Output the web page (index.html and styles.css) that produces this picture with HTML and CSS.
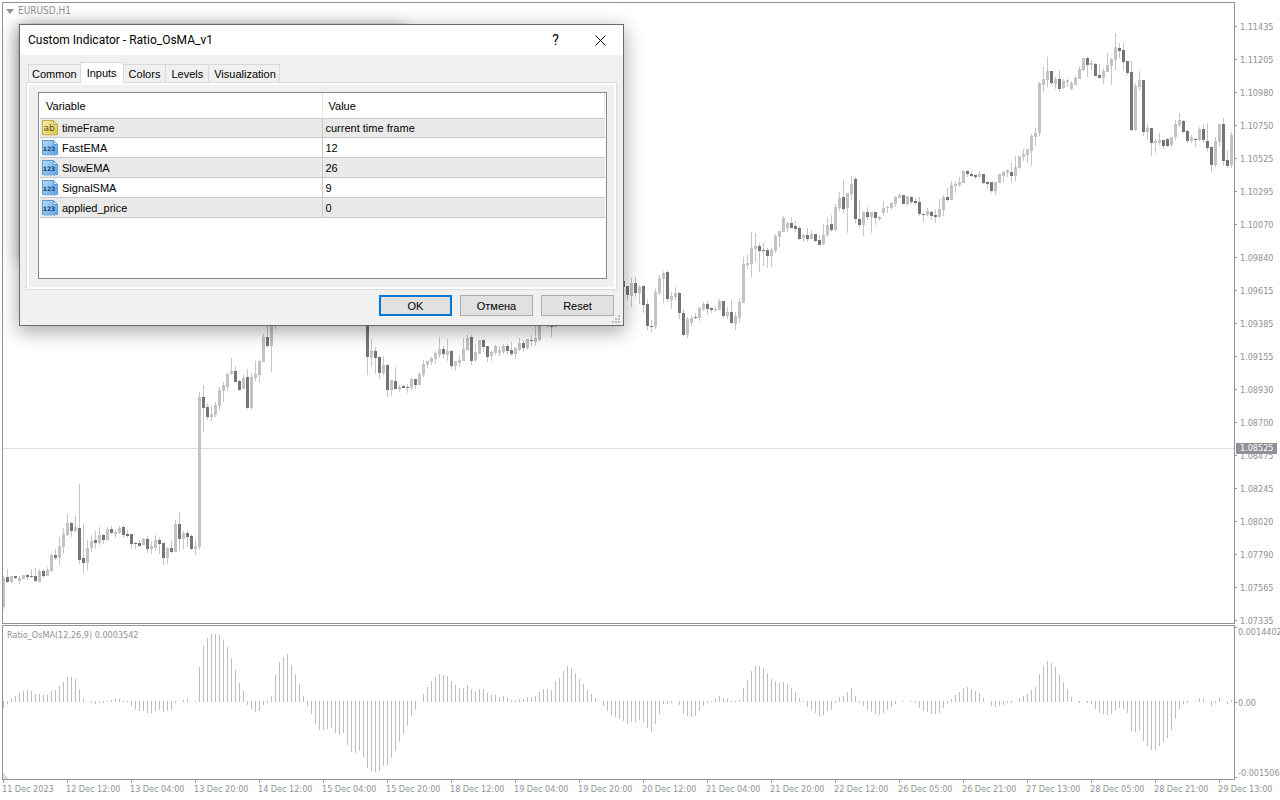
FILE: index.html
```html
<!DOCTYPE html>
<html lang="en">
<head>
<meta charset="utf-8">
<title>EURUSD,H1</title>
<link rel="stylesheet" href="styles.css">
</head>
<body>
<main class="terminal">
  <section class="panel price-panel">
    <div class="plot">
      <svg class="chart" id="price" viewBox="3 3 1231 620" preserveAspectRatio="none" shape-rendering="crispEdges" aria-label="Price chart"></svg>
      <h1 class="caption symbol"><svg class="caret" viewBox="0 0 8 5"><path d="M0 0h8L4 5z"/></svg>EURUSD,H1</h1>
    </div>
    <div class="axis">
      <ul class="scale" id="scale"></ul>
      <span class="bid">1.08525</span>
    </div>
  </section>

  <section class="panel osma-panel">
    <div class="plot">
      <svg class="chart" id="osma" viewBox="3 626 1231 153" preserveAspectRatio="none" shape-rendering="crispEdges" aria-label="Ratio_OsMA histogram"></svg>
      <h2 class="caption">Ratio_OsMA(12,26,9) 0.0003542</h2>
    </div>
    <div class="axis osma-axis">
      <span>0.0014402</span><span>0.00</span><span>-0.001506</span>
    </div>
  </section>

  <ul class="times" id="times"></ul>
</main>

<div class="back-shadow"></div>
<div class="dialog" role="dialog" aria-labelledby="dialog-title">
  <header class="titlebar">
    <h2 class="title" id="dialog-title">Custom Indicator - Ratio_OsMA_v1</h2>
    <button class="sys help" aria-label="Help">?</button>
    <button class="sys" aria-label="Close"><svg width="11" height="11" viewBox="0 0 11 11"><path d="M.5.5l10 10M10.5.5l-10 10"/></svg></button>
  </header>
  <div class="content">
    <div class="tabs" role="tablist">
      <button class="tab" role="tab">Common</button>
      <button class="tab active" role="tab" aria-selected="true">Inputs</button>
      <button class="tab" role="tab">Colors</button>
      <button class="tab" role="tab">Levels</button>
      <button class="tab" role="tab">Visualization</button>
    </div>
    <div class="pane">
      <div class="list">
        <table class="inputs">
          <colgroup><col class="name-col"><col></colgroup>
          <thead><tr><th>Variable</th><th>Value</th></tr></thead>
          <tbody>
            <tr><td><span class="cell"><svg class="icon gold" viewBox="0 0 16 16"><use href="#page"/><text x="7" y="11" class="glyph ab">ab</text></svg>timeFrame</span></td><td>current time frame</td></tr>
            <tr><td><span class="cell"><svg class="icon blue" viewBox="0 0 16 16"><use href="#page"/><text x="7" y="11" class="glyph num">123</text></svg>FastEMA</span></td><td>12</td></tr>
            <tr><td><span class="cell"><svg class="icon blue" viewBox="0 0 16 16"><use href="#page"/><text x="7" y="11" class="glyph num">123</text></svg>SlowEMA</span></td><td>26</td></tr>
            <tr><td><span class="cell"><svg class="icon blue" viewBox="0 0 16 16"><use href="#page"/><text x="7" y="11" class="glyph num">123</text></svg>SignalSMA</span></td><td>9</td></tr>
            <tr><td><span class="cell"><svg class="icon blue" viewBox="0 0 16 16"><use href="#page"/><text x="7" y="11" class="glyph num">123</text></svg>applied_price</span></td><td>0</td></tr>
          </tbody>
        </table>
      </div>
    </div>
  </div>
  <footer class="actions">
    <button class="btn primary">OK</button>
    <button class="btn">Отмена</button>
    <button class="btn">Reset</button>
  </footer>
  <svg class="grip" viewBox="0 0 8 8" shape-rendering="crispEdges"><path d="M6 0h2v2H6zM3 3h2v2H3zM6 3h2v2H6zM0 6h2v2H0zM3 6h2v2H3zM6 6h2v2H6z"/></svg>
</div>

<svg class="sprites" width="0" height="0" aria-hidden="true">
  <defs>
    <linearGradient id="g-blue" x1="0" y1="0" x2="1" y2="1"><stop offset="0" stop-color="#b9dcfa"/><stop offset="1" stop-color="#5c9fdf"/></linearGradient>
    <linearGradient id="g-gold" x1="0" y1="0" x2="1" y2="1"><stop offset="0" stop-color="#f6efb4"/><stop offset="1" stop-color="#d9c548"/></linearGradient>
    <g id="page">
      <path class="sheet" d="M.5.5h11l4 4v10h-2l-1.500 1-1.500-1.500-1.500 1.500-1.500-1.500-1.500 1.500-1.500-1.500-1.500 1.500-1-1h-1.500z"/>
      <path class="fold" d="M11.500.5v4h4z"/>
    </g>
  </defs>
</svg>
<script src="chart.js"></script>
</body>
</html>
```

FILE: styles.css
```css
* { box-sizing: border-box; }
body {
  margin: 0;
  overflow: hidden;
  background: #fffffd;
  color: #000;
  font: 11px/14px "Liberation Sans", Arial, sans-serif;
}
h1, h2, ul { margin: 0; padding: 0; font: inherit; list-style: none; }
button { padding: 0; border: 0; background: none; color: inherit; font: inherit; }

.terminal {
  display: grid;
  grid-template-columns: minmax(0, 1fr);
  grid-template-rows: 1fr 155px 20px;
  height: 100vh;
  min-height: 600px;
  padding-top: 2px;
  color: #8f9199;
  font: 9px/12px "DejaVu Sans Condensed", "DejaVu Sans", sans-serif;
}
.panel { display: grid; grid-template-columns: 1fr 45px; min-height: 0; padding-left: 2px; }
.price-panel { margin-bottom: 1px; }
.plot { position: relative; min-height: 0; border: 1px solid #91929b; }
.chart { display: block; position: absolute; inset: 0; width: 100%; height: 100%; }
.light { fill: #c3c3c3; }
.wick { fill: #c6c6c6; }
.dark { fill: #757575; }
.bar { fill: #bdbdbd; }
.level { fill: #dddddd; }
.caption { position: relative; padding: 3px 4px; }
.symbol { display: flex; align-items: center; gap: 4px; padding: 2px 3px; font-size: 10px; }
.caret { width: 8px; height: 5px; fill: #8f9199; }

.axis { position: relative; white-space: nowrap; }
.scale { padding-top: 8px; }
.scale li { display: flex; align-items: center; gap: 3px; height: 33px; }
.scale li:last-child { margin-bottom: -33px; }
.scale li::before { content: ""; width: 2px; height: 1px; background: #91929b; }
.bid {
  position: absolute;
  top: 441px;
  left: 1px;
  width: 41px;
  height: 11px;
  padding-left: 4px;
  background: #8f9199;
  color: #fff;
  line-height: 11px;
}
.osma-axis { display: flex; flex-direction: column; justify-content: space-between; padding: 1px 0 1px 3px; }
.osma-axis::before {
  content: "";
  position: absolute;
  inset: 2px auto 2px 0;
  width: 2px;
  background: linear-gradient(#91929b, #91929b) 0 0 / 2px 1px no-repeat,
    linear-gradient(#91929b, #91929b) 0 50% / 2px 1px no-repeat,
    linear-gradient(#91929b, #91929b) 0 100% / 2px 1px no-repeat;
}
.times { display: flex; padding-left: 2px; white-space: nowrap; }
.times li { flex: 0 0 64px; }
.times li::before { content: ""; display: block; width: 1px; height: 3px; margin-left: 1px; background: #91929b; }

.back-shadow {
  position: absolute;
  top: 24px;
  left: 19px;
  width: 387px;
  height: 236px;
  box-shadow: 0 0 0 1px #0001, 0 2px 16px #0004;
}
.dialog {
  position: absolute;
  top: 24px;
  left: 19px;
  width: 605px;
  border: 1px solid #6a6a6c;
  background: #f0f0f0;
  box-shadow: 0 5px 18px 1px #0005;
}
.titlebar { display: flex; align-items: center; height: 30px; padding-left: 8px; background: #fff; font-family: Roboto, sans-serif; font-size: 12px; }
.title { flex: 1; }
.sys { display: grid; place-items: center; width: 45px; height: 30px; }
.sys svg { fill: none; stroke: #000; stroke-width: 1; }
.help { font-size: 14px; }
.content { padding: 7px 6px 0; }
.tabs { display: flex; align-items: flex-end; height: 20px; padding-left: 2px; }
.tab { height: 18px; padding: 1px 5px 0; border: 1px solid #d9d9d9; border-width: 1px 1px 0 0; background: #f0f0f0; }
.tab:first-child { padding: 1px 3px 0; border-left-width: 1px; border-right-width: 0; }
.tab:last-child { padding-right: 3px; }
.tab.active { position: relative; height: 21px; margin-bottom: -1px; padding: 0 6px; border-left-width: 1px; background: #fff; }
.pane { padding: 9px 9px 10px 11px; border: 1px solid #dcdcdc; box-shadow: inset 0 0 0 2px #fff; }
.list { height: 187px; padding: 0 1px; border: 1px solid #828790; background: #fff; }
.inputs { width: 100%; border-collapse: separate; border-spacing: 0; table-layout: fixed; }
.name-col { width: 50%; }
.inputs th { height: 26px; padding: 1px 6px 0; border-bottom: 1px solid #c8c8c8; border-right: 1px solid #e5e5e5; font-weight: 400; text-align: left; }
.inputs td { height: 20px; padding: 1px 3px 0; border-bottom: 1px solid #c8c8c8; }
.inputs td:first-child { padding: 0 2px; border-right: 1px solid #c8c8c8; }
.inputs tbody tr:first-child td { height: 19px; padding-top: 0; }
.inputs tbody tr:nth-child(odd) td { background: #eaeaea; }
.cell { display: flex; align-items: center; gap: 4px; }
.icon { width: 16px; height: 16px; }
.blue { fill: url(#g-blue); stroke: #5b9bd6; }
.gold { fill: url(#g-gold); stroke: #c2ad3c; }
.fold { fill: #e4eef2; }
.glyph { font-family: "DejaVu Sans", sans-serif; text-anchor: middle; stroke: none; font-weight: 700; }
.num { font-size: 6px; fill: #0d3f75; }
.ab { font-size: 9px; font-weight: 400; fill: #5f5313; }
.actions { display: flex; justify-content: flex-end; gap: 8px; padding: 5px 9px 9px; }
.btn { width: 73px; height: 21px; border: 1px solid #adadad; background: #e1e1e1; }
.primary { border: 2px solid #0078d7; }
.grip { position: absolute; right: 3px; bottom: 2px; width: 8px; height: 8px; fill: #bfbfbf; }
.sprites { position: absolute; }
```

FILE: chart.js
```js
// Candle: shade (0 light, 1 dark), high, body top, body bottom, low.
// "@n" moves to slot n; each slot is 4 units wide.
const candles = `
0 576 578 607 609|1 569 577 582 583|0 576 576 582 583|1 576 576 578 579|0 576 578 581 584|0 575 575 579 579|1 574 575 577 580|1 569 576 577 578|1 568 576 581 582|0 569 571 582 582|
1 569 571 576 578|0 567 570 576 576|0 554 555 571 572|1 549 555 558 560|0 537 546 558 565|0 528 534 547 554|0 514 523 535 536|1 522 523 531 537|0 516 527 531 532|1 484 528 560 564|
1 524 558 563 573|0 540 548 563 570|0 535 541 548 552|1 531 540 543 549|0 527 535 543 545|1 534 535 540 544|0 527 529 540 541|1 526 529 533 534|0 530 532 534 538|0 526 528 533 534|
1 525 527 535 538|1 530 534 536 538|1 534 534 544 549|1 542 543 544 549|1 540 543 546 547|0 538 539 545 545|1 536 539 549 553|0 541 546 549 554|0 535 540 548 551|1 537 540 544 554|
1 543 543 558 565|0 547 548 558 564|1 540 548 552 553|0 520 524 552 552|1 512 524 539 551|0 531 533 539 549|1 530 533 537 547|1 534 536 549 550|0 540 546 549 555|0 392 397 547 550|
1 385 397 408 432|1 403 407 417 420|0 406 414 417 421|0 402 405 415 417|0 387 390 406 411|0 382 385 391 402|0 373 374 387 391|0 358 371 374 375|1 366 371 382 382|1 380 381 390 391|
0 375 378 389 389|1 369 377 408 409|0 373 377 408 410|0 361 374 378 381|0 360 361 375 383|0 334 337 362 362|1 320 337 346 347|0 300 300 346 372|0 300 300 322 329|@91|
1 300 310 357 375|0 339 351 357 366|1 347 351 358 374|1 356 357 373 379|0 356 365 373 375|1 364 365 390 397|0 380 380 390 396|1 367 381 389 389|0 385 387 389 392|
1 385 386 388 388|1 384 387 388 393|0 378 379 388 390|1 379 379 385 389|0 372 374 385 385|0 360 364 375 377|0 361 361 365 368|0 357 358 362 365|0 351 353 359 364|0 337 349 355 358|
1 346 349 354 358|0 339 351 355 361|1 350 351 366 369|0 361 361 366 371|0 355 360 363 367|0 338 349 361 361|0 335 338 350 351|1 335 337 361 365|0 344 352 360 362|0 340 340 354 354|
1 339 340 347 352|1 346 346 357 362|0 351 352 356 361|0 345 346 353 355|0 346 350 353 356|0 344 346 352 354|1 344 346 351 355|1 342 350 354 356|0 347 348 354 359|0 338 343 350 351|
1 341 343 348 352|0 339 339 348 350|1 335 340 341 347|0 325 338 342 346|0 310 320 340 341|@136|1 310 320 326 328|1 310 320 327 337|0 310 320 327 327|@155|1 281 281 287 287|1 286 286 295 300|
0 278 283 296 307|1 277 283 293 297|0 285 287 293 304|1 285 286 305 313|1 299 304 326 330|1 320 326 327 332|0 289 292 327 329|0 275 278 293 295|0 271 273 279 303|1 270 272 299 302|
0 292 296 300 309|0 287 293 297 300|1 292 293 313 319|1 309 313 335 336|0 317 319 335 338|0 315 318 323 326|1 313 317 318 319|0 307 308 318 321|0 302 304 309 311|1 301 304 309 315|
1 307 308 310 313|0 307 309 310 312|0 299 301 310 310|1 301 301 316 318|0 307 312 316 319|1 300 312 323 324|0 312 316 324 330|0 298 302 318 323|0 257 264 303 303|0 254 263 265 269|
0 232 248 264 277|0 233 246 249 262|1 243 246 251 272|1 243 250 251 266|1 248 250 256 268|0 248 250 256 267|0 234 236 251 253|0 231 231 237 247|0 216 218 232 232|0 222 223 228 232|
1 217 223 228 228|1 221 226 229 232|1 226 228 239 240|0 234 235 238 242|1 228 235 239 242|0 230 234 239 239|1 234 234 241 242|1 235 240 245 245|0 224 235 244 245|0 218 225 235 237|
1 215 224 230 232|0 204 207 230 231|0 192 198 208 211|1 180 197 209 213|0 193 193 208 233|0 176 184 194 200|1 177 179 219 223|1 200 219 225 227|0 211 212 225 236|1 207 212 217 220|
0 212 212 217 233|1 212 212 218 225|0 216 217 219 221|0 201 208 213 216|0 206 207 208 213|0 202 203 208 210|0 196 197 204 207|0 193 195 198 198|1 195 195 204 204|0 196 196 204 206|
1 196 197 202 204|1 198 201 203 205|1 197 202 214 216|1 213 214 215 222|0 208 211 215 216|1 211 212 216 220|1 210 215 217 223|0 199 209 217 218|0 195 197 210 216|1 188 197 200 202|
0 181 185 200 200|0 181 184 186 193|0 177 182 185 187|0 170 171 183 183|1 170 171 174 177|1 172 174 176 177|1 174 175 177 179|0 171 174 177 177|1 174 174 183 184|1 181 182 184 189|
1 182 182 191 193|0 182 182 191 195|0 174 174 183 183|0 171 172 176 182|0 169 170 173 177|1 163 172 176 183|0 156 167 176 181|0 156 156 168 169|0 149 154 157 161|0 149 149 155 163|
0 134 136 151 166|0 128 133 137 146|0 82 83 133 136|0 67 79 85 92|0 57 71 80 87|1 71 71 83 85|0 77 79 84 89|1 70 79 89 92|0 79 81 88 89|0 79 80 82 87|
0 81 83 89 90|0 76 78 85 85|0 66 69 79 79|0 58 58 70 71|1 57 58 65 77|0 60 63 65 70|1 63 64 76 76|1 64 75 78 78|0 68 71 78 84|0 53 65 72 72|
0 58 59 66 85|0 33 47 60 70|1 43 48 51 58|1 43 50 62 70|1 61 61 73 75|1 61 72 130 131|0 83 86 130 131|0 71 80 87 91|1 80 80 132 136|0 124 128 132 140|
1 128 128 143 156|0 139 141 143 153|0 133 140 143 145|1 140 140 146 149|1 138 139 146 147|0 137 137 145 147|0 120 124 137 140|0 113 120 125 127|1 120 121 132 133|1 130 131 141 143|
0 135 138 141 143|1 138 139 140 147|0 127 129 140 141|1 124 129 140 143|1 123 141 148 151|1 146 147 165 172|0 137 141 165 167|0 124 124 142 147|1 118 124 161 166|1 150 160 166 168|
0 132 135 165 168`;

const histogram = [
-7,-3,3,6,9,11,12,11,8,8,7,7,11,12,16,20,25,25,23,13,3,0,-2,-3,-2,-2,1,2,3,3,1,1,-5,-8,-10,-10,-12,-12,-10,-9,
-11,-10,-9,-2,0,2,3,0,1,35,56,64,68,68,67,62,55,44,32,19,11,-4,-8,-11,-10,-4,-2,6,27,40,45,48,37,28,18,6,-5,-13,-23,-29,
-29,-28,-27,-32,-34,-32,-44,-51,-52,-50,-56,-67,-70,-71,-70,-65,-64,-57,-50,-41,-33,-25,-15,-9,0,8,15,21,25,28,27,26,21,17,14,14,17,13,11,13,
13,9,7,7,5,6,4,2,2,3,3,5,5,6,10,13,13,12,21,24,31,36,34,29,23,18,12,8,4,0,-5,-10,-14,-16,-18,-20,-23,-21,-21,-19,
-21,-27,-31,-23,-13,-3,-3,-2,0,-4,-13,-15,-16,-15,-10,-5,-2,1,3,6,4,3,1,1,2,14,22,31,36,36,34,29,23,21,19,20,18,14,10,4,
1,-6,-9,-12,-15,-14,-10,-9,-2,5,6,10,14,6,-2,-5,-9,-11,-13,-14,-12,-9,-6,-3,0,1,0,1,-2,-7,-10,-11,-13,-13,-12,-7,-3,3,7,10,
14,15,13,11,9,4,0,-5,-6,-5,-4,-2,-2,0,4,6,8,12,15,28,36,41,39,35,27,20,13,5,0,-2,0,-2,-3,-8,-12,-13,-14,-13,-9,-7,
-8,-12,-30,-31,-29,-40,-45,-49,-49,-45,-41,-37,-29,-18,-8,-3,-2,0,1,4,3,0,-5,-2,5,0,-3,2];

const rect = (cls, x, y, w, h) => `<rect class="${cls}" x="${x}" y="${y}" width="${w}" height="${h}"/>`;

let slot = 0;
let out = rect("level", 3, 448, 1231, 1);
for (const item of candles.trim().split("|")) {
  const text = item.trim();
  if (text.startsWith("@")) { slot = Number(text.slice(1)); continue; }
  const [shade, high, top, bottom, low] = text.split(" ").map(Number);
  const x = 3 + slot * 4;
  out += rect("wick", x, high, 1, low - high);
  out += rect(shade ? "dark" : "light", x - 1, top, 3, bottom - top);
  slot++;
}
document.getElementById("price").innerHTML = out;

document.getElementById("osma").innerHTML = histogram.map((v, i) =>
  v === 0 ? "" : rect("bar", 3 + i * 4, v > 0 ? 702 - v : 701, 1, Math.abs(v))
).join("") + '<path class="level" d="M3 773l6 6H3z"/>';

const list = (id, items) => {
  document.getElementById(id).innerHTML = items.map(t => `<li>${t}</li>`).join("");
};
list("scale", ["1.11435", "1.11205", "1.10980", "1.10750", "1.10525", "1.10295", "1.10070", "1.09840", "1.09615", "1.09385",
  "1.09155", "1.08930", "1.08700", "1.08475", "1.08245", "1.08020", "1.07790", "1.07565", "1.07335"]);
list("times", ["11 Dec 2023", "12 Dec 12:00", "13 Dec 04:00", "13 Dec 20:00", "14 Dec 12:00", "15 Dec 04:00", "15 Dec 20:00",
  "18 Dec 12:00", "19 Dec 04:00", "19 Dec 20:00", "20 Dec 12:00", "21 Dec 04:00", "21 Dec 20:00", "22 Dec 12:00",
  "26 Dec 05:00", "26 Dec 21:00", "27 Dec 13:00", "28 Dec 05:00", "28 Dec 21:00", "29 Dec 13:00"]);
```
